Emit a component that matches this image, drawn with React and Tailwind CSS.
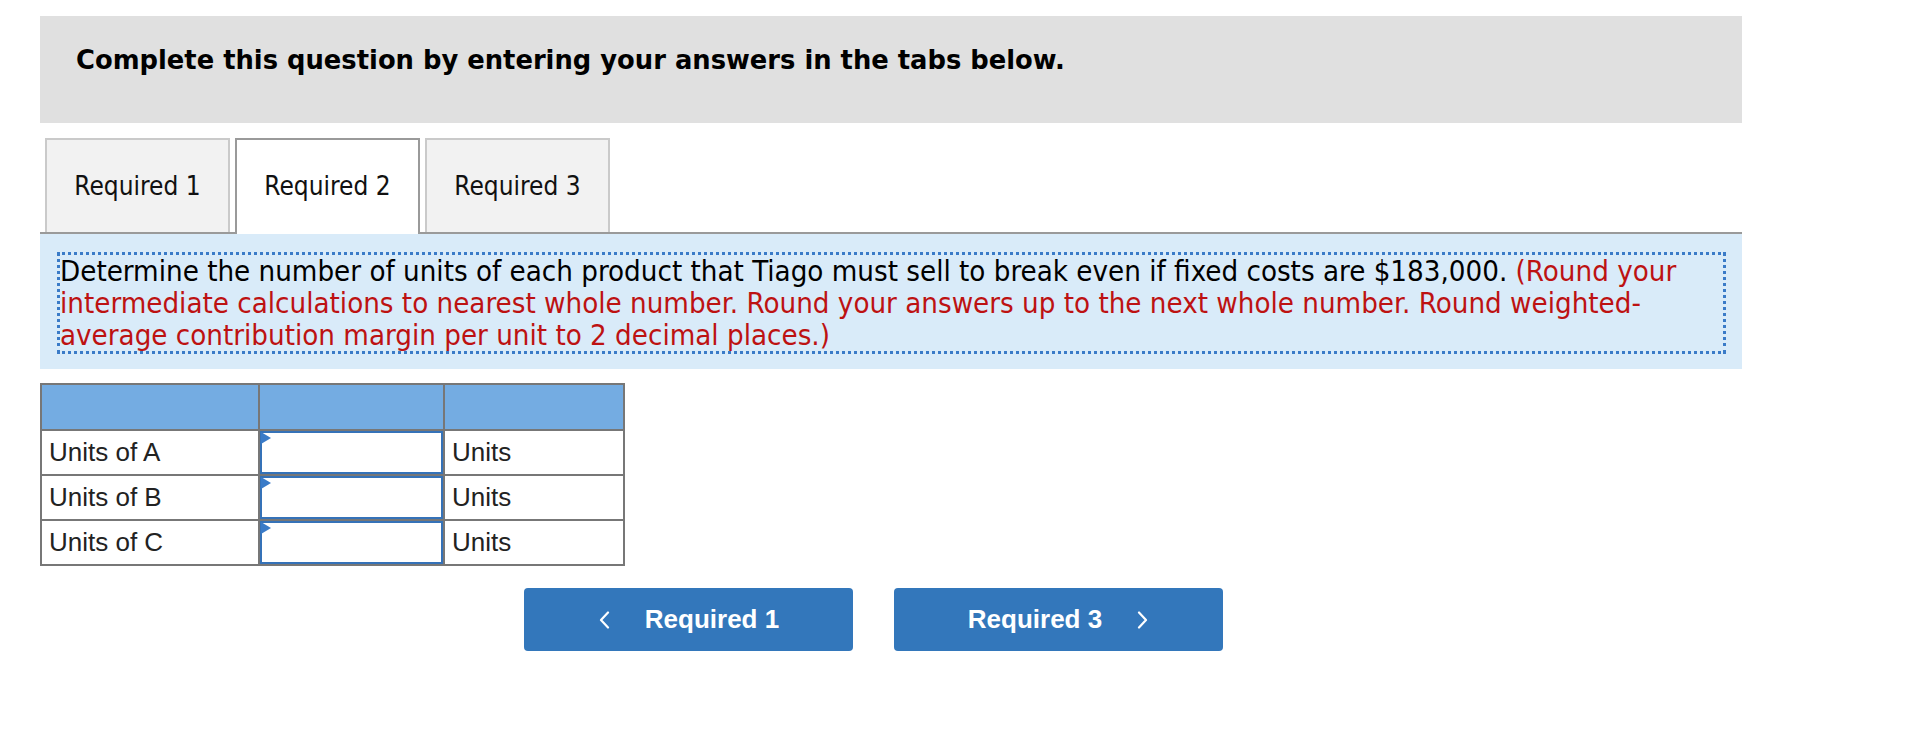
const ROWS = ["Units of A", "Units of B", "Units of C"];

function Chevron({ dir }) {
  return (
    <svg width="12" height="18" viewBox="0 0 12 18" fill="none" className="shrink-0">
      <path
        d={dir === "left" ? "M10 1.5 L3 9 L10 16.5" : "M2 1.5 L9 9 L2 16.5"}
        stroke="white"
        strokeWidth="2.2"
        strokeLinecap="round"
        strokeLinejoin="round"
      />
    </svg>
  );
}

export default function App() {
  return (
    <div className="pl-[40px] pt-[16px] bg-white min-h-screen font-['DejaVu_Sans',sans-serif]">
      <div className="w-[1702px]">
        {/* Header */}
        <div className="h-[107px] bg-[#e0e0e0] pl-[36px] pt-[29px]">
          <h2 className="text-[25.8px] leading-[30px] font-bold text-black">
            Complete this question by entering your answers in the tabs below.
          </h2>
        </div>

        {/* Tabs */}
        <div className="mt-[15px] flex items-start gap-[5px] pl-[5px] [font-stretch:condensed] text-[26px] text-[#111]">
          <div className="w-[185px] h-[94px] flex items-center justify-center bg-[#f2f2f2] border-2 border-b-0 border-[#cacaca]">
            Required 1
          </div>
          <div className="relative z-10 w-[185px] h-[96px] -mb-[2px] flex items-center justify-center bg-white border-2 border-b-0 border-[#9a9a9a] pb-[2px]">
            Required 2
          </div>
          <div className="w-[185px] h-[94px] flex items-center justify-center bg-[#f2f2f2] border-2 border-b-0 border-[#cacaca]">
            Required 3
          </div>
        </div>

        {/* Question panel */}
        <div className="border-t-2 border-[#9a9a9a] bg-[#d9ebf9] pt-[18px] pb-[15px] pl-[17px] pr-[16px]">
          <div className="border-[3px] border-dotted border-[#3a7bc8] pr-[20px]">
            <p className="text-[29.2px] leading-[32px] [font-stretch:condensed] text-black">
              Determine the number of units of each product that Tiago must sell to break even if fixed costs
              are $183,000.{" "}
              <span className="text-[#bd1212]">
                (Round your intermediate calculations to nearest whole number. Round your answers up to the next
                whole number. Round weighted-average contribution margin per unit to 2 decimal places.)
              </span>
            </p>
          </div>
        </div>

        {/* Answer table */}
        <div className="mt-[14px] w-[585px] grid grid-cols-[216px_183px_178px] gap-[2px] border-2 border-[#777] bg-[#777] font-['Liberation_Sans',Arial,sans-serif] text-[26px] text-[#222]">
          <div className="h-[44px] bg-[#74ace2]" />
          <div className="h-[44px] bg-[#74ace2]" />
          <div className="h-[44px] bg-[#74ace2]" />
          {ROWS.map((r) => (
            <div key={r} className="contents">
              <div className="h-[43px] bg-white pl-[7px] flex items-center">{r}</div>
              <div className="relative h-[43px] bg-white border-2 border-[#3572b8]">
                <span className="absolute -left-[1px] -top-[1px] w-0 h-0 border-y-[6px] border-y-transparent border-l-[10px] border-l-[#3a7bc8]" />
              </div>
              <div className="h-[43px] bg-white pl-[7px] flex items-center">Units</div>
            </div>
          ))}
        </div>

        {/* Navigation buttons */}
        <div className="mt-[22px] flex justify-center gap-[41px] pr-[35px] font-['Liberation_Sans',Arial,sans-serif]">
          <button className="w-[329px] h-[63px] rounded-[4px] bg-[#3377bb] text-white text-[26px] font-bold flex items-center justify-center gap-[35px]">
            <Chevron dir="left" />
            <span>Required 1</span>
          </button>
          <button className="w-[329px] h-[63px] rounded-[4px] bg-[#3377bb] text-white text-[26px] font-bold flex items-center justify-center gap-[35px]">
            <span>Required 3</span>
            <Chevron dir="right" />
          </button>
        </div>
      </div>
    </div>
  );
}
